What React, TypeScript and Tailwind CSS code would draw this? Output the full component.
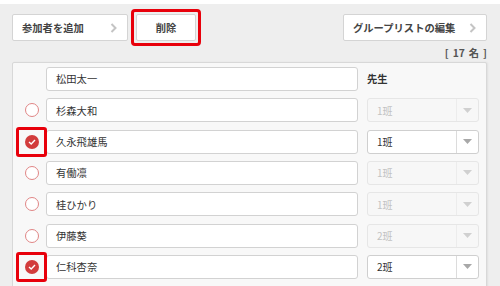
import React from 'react';

interface Member {
  name: string;
  checked?: boolean;
  group?: string;
  enabled?: boolean;
}

const members: Member[] = [
  { name: '杉森大和', group: '1班' },
  { name: '久永飛雄馬', checked: true, group: '1班', enabled: true },
  { name: '有働凛', group: '1班' },
  { name: '桂ひかり', group: '1班' },
  { name: '伊藤葵', group: '2班' },
  { name: '仁科杏奈', checked: true, group: '2班', enabled: true },
];

const font = { fontFamily: '"Noto Sans CJK JP", "Noto Sans", sans-serif' };

const Chevron = () => (
  <svg width="7" height="10" viewBox="0 0 7 10" className="shrink-0">
    <polyline points="1.5,1 5.5,5 1.5,9" fill="none" stroke="#c4c4c4" strokeWidth="2" />
  </svg>
);

const Radio = ({ checked }: { checked?: boolean }) =>
  checked ? (
    <div className="relative w-[14px] h-[14px] rounded-full bg-[#d23c3c] flex items-center justify-center">
      <svg width="8" height="6" viewBox="0 0 8 6">
        <polyline points="1,3 3.2,5 7,1" fill="none" stroke="#fff" strokeWidth="1.4" />
      </svg>
      {/* red highlight around the selected member */}
      <div className="absolute left-[-9px] top-[-8px] w-[31px] h-[30px] border-[3px] border-[#e8000b] rounded-[3px]" />
    </div>
  ) : (
    <div className="w-[14px] h-[14px] rounded-full border-[1.5px] border-[#e08585] bg-white" />
  );

const GroupSelect = ({ value, enabled }: { value: string; enabled?: boolean }) => (
  <div
    className={`flex w-[112px] h-[24px] rounded-[3px] border ${
      enabled ? 'bg-white border-[#cfcfcf] text-[#333]' : 'bg-[#f7f7f7] border-[#e6e6e6] text-[#c2c2c2]'
    }`}
  >
    <div className="flex-1 flex items-center pl-[9px] text-[10px]">{value}</div>
    <div className={`w-[22px] flex items-center justify-center border-l ${enabled ? 'border-[#dcdcdc]' : 'border-[#ececec]'}`}>
      <svg width="9" height="5" viewBox="0 0 9 5">
        <polygon points="0,0 9,0 4.5,5" fill={enabled ? '#a8a8a8' : '#d0d0d0'} />
      </svg>
    </div>
  </div>
);

const NameInput = ({ name }: { name: string }) => (
  <div className="w-[312px] h-[24px] flex items-center px-[9px] bg-white border border-[#d2d2d2] rounded-[3px] text-[10.3px] text-[#333]">
    {name}
  </div>
);

export default function App() {
  return (
    <div className="w-[500px] h-[286px] overflow-hidden bg-[#eeeeee] border-t-[4px] border-white" style={font}>
      <div className="flex items-center pl-[12px] pr-[13px] pt-[5px]">
        <button className="w-[116px] h-[27px] flex items-center justify-between pl-[9px] pr-[10px] bg-white border border-[#d4d4d4] rounded-[2px] text-[10.3px] font-bold text-[#444]">
          参加者を追加
          <Chevron />
        </button>
        <div className="ml-[3px] p-[2px] border-[3px] border-[#e8000b] rounded-[4px]">
          <button className="w-[60px] h-[27px] flex items-center justify-center bg-white border border-[#d4d4d4] rounded-[2px] text-[10.3px] font-bold text-[#444]">
            削除
          </button>
        </div>
        <button className="ml-auto w-[144px] h-[27px] flex items-center justify-between pl-[9px] pr-[10px] bg-white border border-[#d4d4d4] rounded-[2px] text-[10.3px] font-bold text-[#444]">
          グループリストの編集
          <Chevron />
        </button>
      </div>
      <div className="h-[14px] flex items-center justify-end gap-[4px] pr-[13px] text-[10.3px] font-bold text-[#555]">
        <span>[</span>
        <span>17</span>
        <span>名</span>
        <span>]</span>
      </div>
      <div className="mt-[2px] ml-[12px] mr-[13px] h-[240px] bg-[#f8f8f8] border border-[#d8d8d8] rounded-[2px] pt-[4px] shadow-[1px_0_2px_rgba(0,0,0,0.06)] flex flex-col gap-[7.33px]">
        <div className="flex items-center h-[24px]">
          <div className="w-[33px]" />
          <NameInput name="松田太一" />
          <div className="ml-[9px] text-[10.3px] font-bold text-[#333]">先生</div>
        </div>
        {members.map((m) => (
          <div key={m.name} className="flex items-center h-[24px]">
            <div className="w-[33px] pl-[12px]">
              <Radio checked={m.checked} />
            </div>
            <NameInput name={m.name} />
            <div className="ml-[9px]">
              <GroupSelect value={m.group || ''} enabled={m.enabled} />
            </div>
          </div>
        ))}
      </div>
    </div>
  );
}
